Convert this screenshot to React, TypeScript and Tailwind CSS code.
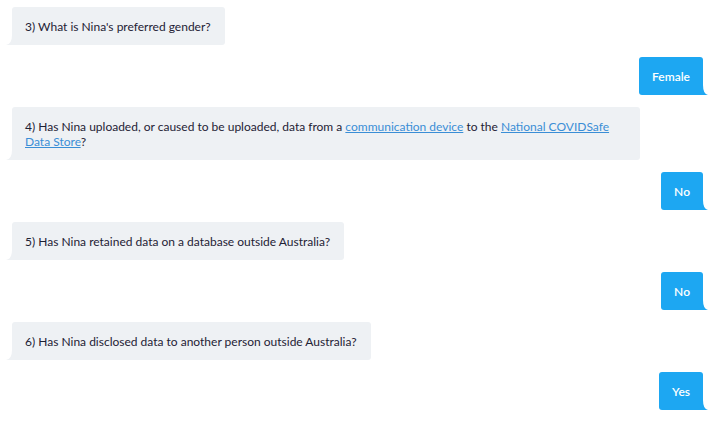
import type { ReactNode } from "react";

type Msg = { from: "bot" | "user"; body: ReactNode };

const messages: Msg[] = [
  { from: "bot", body: "3) What is Nina's preferred gender?" },
  { from: "user", body: "Female" },
  {
    from: "bot",
    body: (
      <>
        4) Has Nina uploaded, or caused to be uploaded, data from a{" "}
        <a href="#" className="text-[#3a8ed6] underline">
          communication device
        </a>{" "}
        to the{" "}
        <a href="#" className="text-[#3a8ed6] underline">
          National COVIDSafe Data Store
        </a>
        ?
      </>
    ),
  },
  { from: "user", body: "No" },
  { from: "bot", body: "5) Has Nina retained data on a database outside Australia?" },
  { from: "user", body: "No" },
  { from: "bot", body: "6) Has Nina disclosed data to another person outside Australia?" },
  { from: "user", body: "Yes" },
];

function BotBubble({ children }: { children: ReactNode }) {
  return (
    <div className="relative self-start max-w-[628px] rounded-[3px] rounded-bl-none bg-[#eef1f4] pl-[13px] pr-[14px] pt-[12px] pb-[11px] text-[12px] leading-[15px] text-[#1e2234]">
      {children}
      <svg
        className="absolute bottom-0 left-[-6px]"
        width="6"
        height="10"
        viewBox="0 0 6 10"
      >
        <path d="M6 0 Q6 9 0 10 L6 10 Z" fill="#eef1f4" />
      </svg>
    </div>
  );
}

function UserBubble({ children }: { children: ReactNode }) {
  return (
    <div className="relative self-end rounded-[3px] rounded-br-none bg-[#1da7f2] px-[13px] pt-[12px] pb-[11px] text-[12px] font-semibold leading-[15px] text-white">
      {children}
      <svg
        className="absolute bottom-0 right-[-5px]"
        width="5"
        height="10"
        viewBox="0 0 5 10"
      >
        <path d="M0 0 Q0 9 5 10 L0 10 Z" fill="#1da7f2" />
      </svg>
    </div>
  );
}

export default function App() {
  return (
    <div
      className="flex min-h-[421px] w-[713px] flex-col gap-3 bg-white pl-[12px] pr-[10px] pt-[7px]"
      style={{ fontFamily: 'Lato, "Liberation Sans", sans-serif' }}
    >
      {messages.map((m, i) =>
        m.from === "bot" ? (
          <BotBubble key={i}>{m.body}</BotBubble>
        ) : (
          <UserBubble key={i}>{m.body}</UserBubble>
        )
      )}
    </div>
  );
}
